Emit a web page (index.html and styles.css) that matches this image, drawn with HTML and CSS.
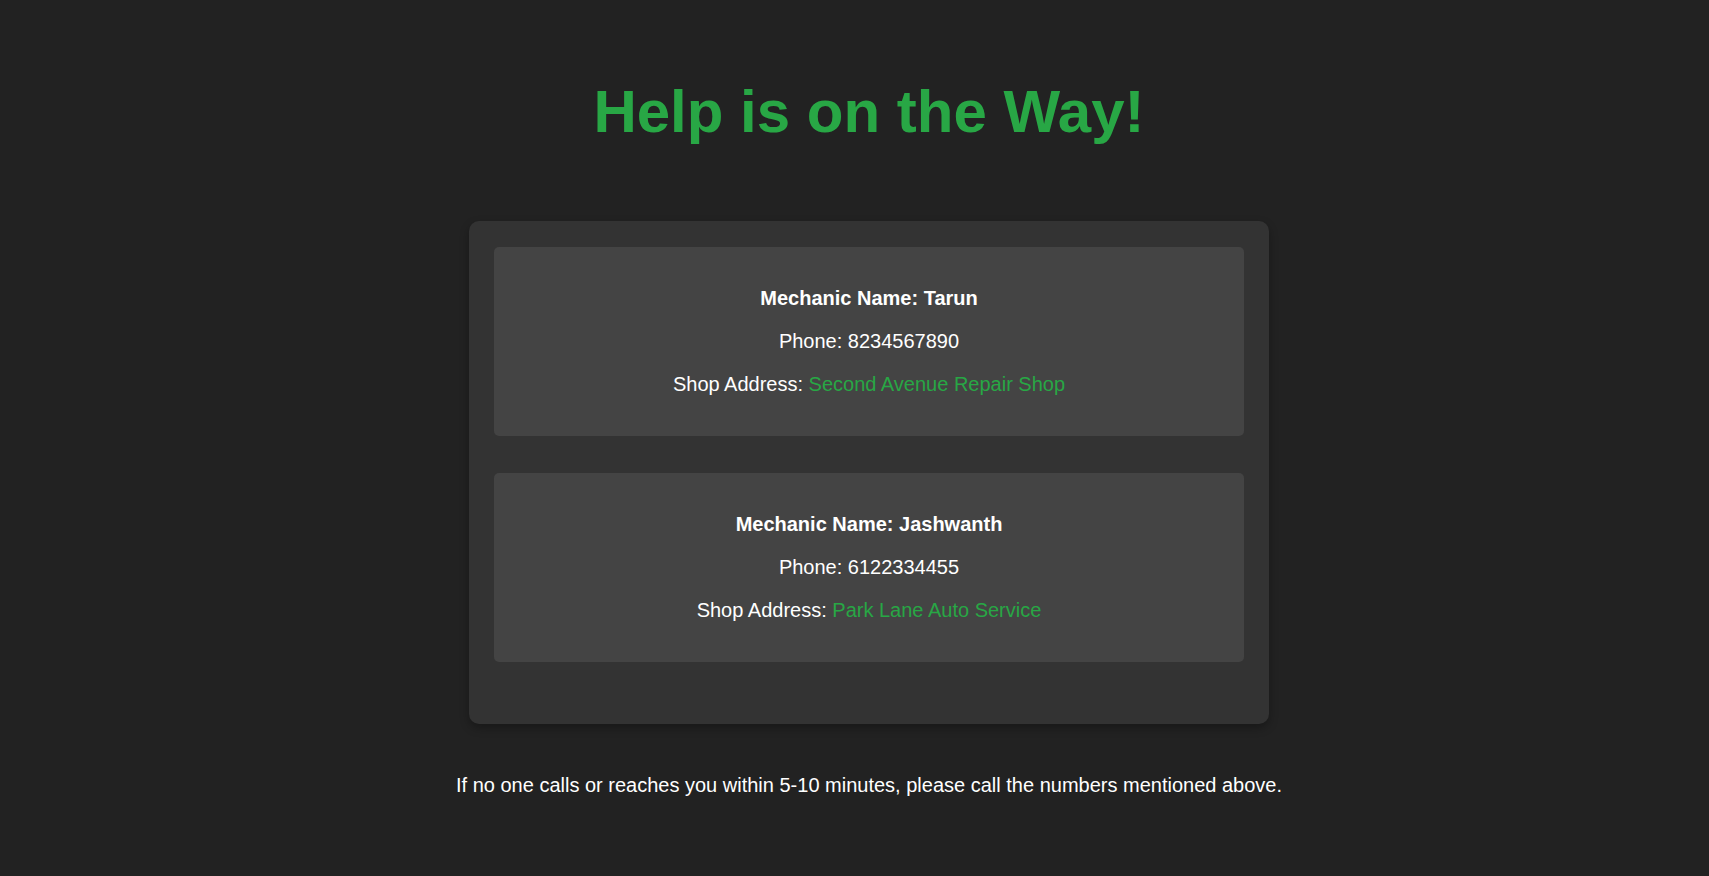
FILE: index.html
```html
<!DOCTYPE html>
<html lang="en">
<head>
<meta charset="utf-8">
<title>Help is on the Way!</title>
<link rel="stylesheet" href="styles.css">
</head>
<body>
<main class="page">
  <h1 class="title">Help is on the Way!</h1>
  <section class="panel">
    <div class="mechanic">
      <p class="name">Mechanic Name: Tarun</p>
      <p>Phone: 8234567890</p>
      <p>Shop Address: <span class="shop">Second Avenue Repair Shop</span></p>
    </div>
    <div class="mechanic">
      <p class="name">Mechanic Name: Jashwanth</p>
      <p>Phone: 6122334455</p>
      <p>Shop Address: <span class="shop">Park Lane Auto Service</span></p>
    </div>
  </section>
  <p class="note">If no one calls or reaches you within 5-10 minutes, please call the numbers mentioned above.</p>
</main>
</body>
</html>
```
FILE: styles.css
```css
html, body {
  margin: 0;
  padding: 0;
  background: #222222;
}
body {
  font-family: "Liberation Sans", Arial, sans-serif;
  color: #ffffff;
}
.page {
  display: flex;
  flex-direction: column;
  align-items: center;
  padding: 77px 0 40px 29px;
  text-align: center;
}
.title {
  margin: 0 0 75px;
  font-size: 60px;
  font-weight: bold;
  line-height: 69px;
  color: #28a745;
}
.panel {
  box-sizing: border-box;
  width: 800px;
  padding: 26px 25px 25px;
  background: #333333;
  border-radius: 10px;
  box-shadow: 0 4px 10px rgba(0, 0, 0, 0.3);
}
.mechanic {
  padding: 20px;
  margin-bottom: 37px;
  background: #444444;
  border-radius: 5px;
}
.mechanic p {
  margin: 20px 0;
  font-size: 20px;
  line-height: 23px;
}
.mechanic .name {
  font-weight: bold;
}
.shop {
  color: #28a745;
}
.note {
  margin: 50px 0 0;
  font-size: 20px;
  line-height: 23px;
}
```
